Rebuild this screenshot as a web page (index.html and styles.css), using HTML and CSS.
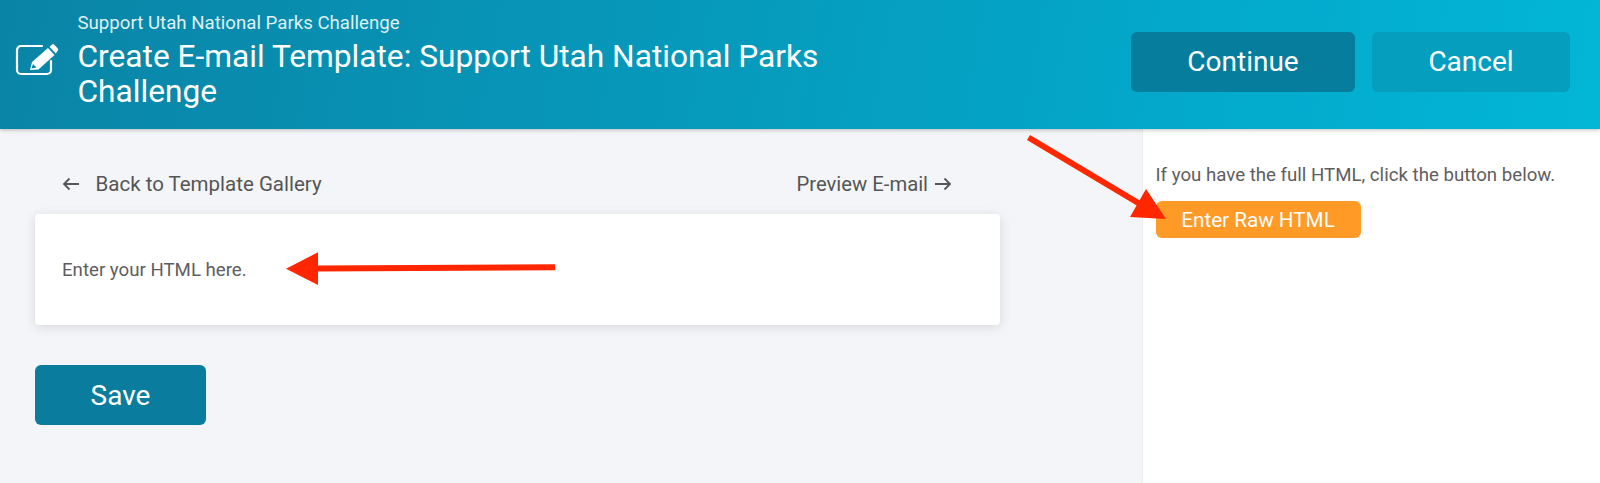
FILE: index.html
```html
<!DOCTYPE html>
<html lang="en">
<head>
<meta charset="utf-8">
<title>Create E-mail Template</title>
<link rel="stylesheet" href="styles.css">
</head>
<body>
<header class="topbar">
  <svg class="edit-icon" viewBox="0 0 44 33" width="44" height="33" aria-hidden="true">
    <path d="M27 3H6a4 4 0 0 0-4 4v20a4 4 0 0 0 4 4h26a4 4 0 0 0 4-4v-9" fill="none" stroke="#fff" stroke-width="2.200" stroke-linecap="round"/>
    <path d="M15 27 17 19 33 5 39.500 12 23.500 26.500z" fill="#fff"/>
    <path d="M16.500 25.500 18 21l3.500 3.500z" fill="#0a84a6"/>
    <path d="M34.500 3.800 37 1.600a1.400 1.400 0 0 1 2 0l3.800 4a1.400 1.400 0 0 1 0 2L40.800 10.400z" fill="#fff"/>
  </svg>
  <div class="titles">
    <div class="eyebrow">Support Utah National Parks Challenge</div>
    <h1 class="title">Create E-mail Template: Support Utah National Parks Challenge</h1>
  </div>
  <div class="actions">
    <button class="btn btn-continue">Continue</button>
    <button class="btn btn-cancel">Cancel</button>
  </div>
</header>
<div class="body">
  <main class="main">
    <nav class="crumbs">
      <a class="crumb">
        <svg class="back-icon" viewBox="0 0 18 14" width="18" height="14" aria-hidden="true"><path d="M17 7H2M7.500 1.500 2 7l5.500 5.500" fill="none" stroke="#555" stroke-width="1.800"/></svg>
        Back to Template Gallery
      </a>
      <a class="crumb crumb-next">Preview E-mail
        <svg class="next-icon" viewBox="0 0 18 14" width="18" height="14" aria-hidden="true"><path d="M1 7H16M10.500 1.500 16 7l-5.500 5.500" fill="none" stroke="#555" stroke-width="1.800"/></svg>
      </a>
    </nav>
    <section class="card">Enter your HTML here.</section>
    <button class="save">Save</button>
  </main>
  <aside class="side">
    <p class="hint">If you have the full HTML, click the button below.</p>
    <button class="raw">Enter Raw HTML</button>
  </aside>
</div>
<svg class="arrows" viewBox="0 0 1600 483" width="1600" height="483" aria-hidden="true">
  <path d="M555 267.300 318 268.500" stroke="#ff2600" stroke-width="6" fill="none"/>
  <path d="M286 268.700 318 252.300V285z" fill="#ff2600"/>
  <path d="M1028.500 137.500 1140 204" stroke="#ff2600" stroke-width="6" fill="none"/>
  <path d="M1146 189 1130 217 1166 219z" fill="#ff2600"/>
</svg>
</body>
</html>
```
FILE: styles.css
```css
* { box-sizing: border-box; }
html, body { margin: 0; height: 100%; }
body {
  position: relative;
  height: 483px;
  overflow: hidden;
  font-family: Roboto, "Liberation Sans", sans-serif;
  background: #f4f5f8;
  color: #555;
  display: flex;
  flex-direction: column;
}
.topbar {
  height: 129px;
  flex: none;
  display: flex;
  align-items: flex-start;
  color: #fff;
  background: linear-gradient(100deg, #0a84a6 0%, #04a4c6 65%, #02b6d6 100%);
  box-shadow: 0 1px 4px rgba(0,0,0,.25);
  position: relative;
  z-index: 1;
}
.edit-icon { margin: 43px 0 0 15px; flex: none; }
.titles { margin-left: 18.500px; width: 780px; padding-top: 12px; flex: none; }
.eyebrow { font-size: 18.670px; line-height: 22px; color: #dff1f6; }
.title { margin: 5px 0 0; font-size: 31.670px; font-weight: 400; line-height: 35px; }
.actions { margin-left: auto; padding: 32px 30px 0 0; display: flex; gap: 17px; }
.btn {
  height: 60px;
  border: 0;
  border-radius: 6px;
  padding: 0 0 2px;
  color: #fff;
  font: 400 28px Roboto, sans-serif;
}
.btn-continue { width: 224px; background: #067d9d; }
.btn-cancel { width: 198px; background: #069ebf; }
.body { flex: 1; display: flex; min-height: 0; }
.main { width: 1142px; flex: none; padding: 39px 0 0 35px; }
.crumbs { width: 965px; height: 32px; display: flex; justify-content: space-between; align-items: center; padding: 0 48px 0 26.500px; }
.crumb { font-size: 20.500px; color: #555; display: flex; align-items: center; }
.crumb-next { font-size: 20.250px; }
.back-icon { margin-right: 16px; }
.next-icon { margin-left: 6px; }
.card {
  margin-top: 14px;
  width: 965px;
  height: 111px;
  background: #fff;
  border-radius: 4px;
  box-shadow: 0 2px 12px rgba(0,0,0,.12);
  padding: 0 27px;
  display: flex;
  align-items: center;
  font-size: 18.670px;
  color: #5e5e5e;
}
.save {
  margin-top: 40px;
  width: 171px;
  height: 60px;
  display: block;
  border: 0;
  border-radius: 6px;
  background: #0a7d9e;
  color: #fff;
  font: 400 28px Roboto, sans-serif;
}
.side { flex: 1; background: #fff; border-left: 1px solid #eceef0; padding: 36px 0 0 12.500px; }
.hint { margin: 0; font-size: 18.670px; line-height: 20px; color: #5e5e5e; }
.raw {
  margin-top: 16px;
  display: block;
  width: 205px;
  height: 37px;
  border: 0;
  border-radius: 6px;
  background: #ff9a26;
  color: #fff;
  font: 400 20.670px Roboto, sans-serif;
}
.arrows { position: absolute; left: 0; top: 0; z-index: 2; pointer-events: none; }
```
